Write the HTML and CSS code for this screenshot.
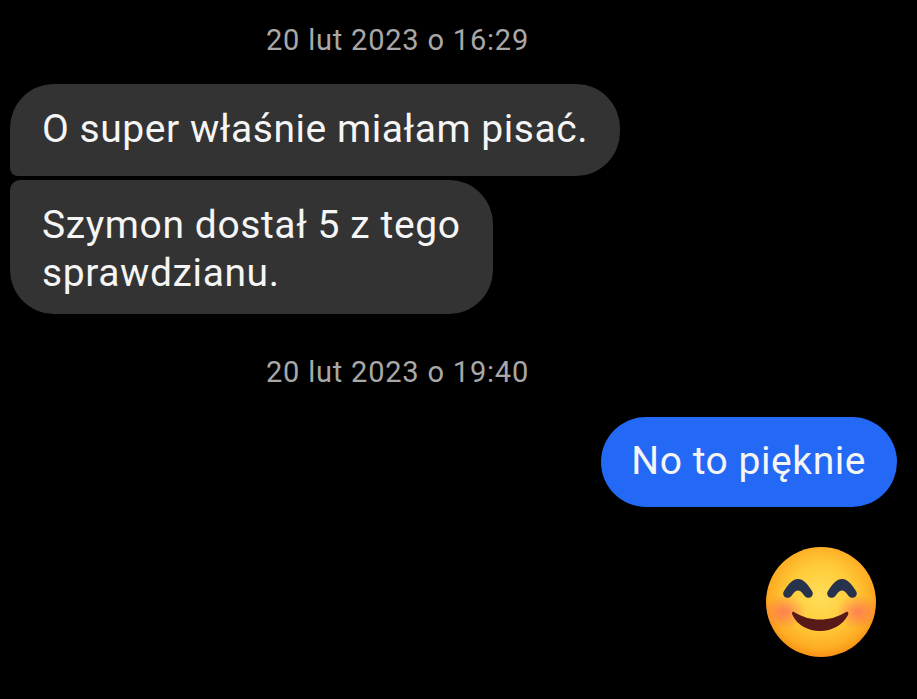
FILE: index.html
```html
<!DOCTYPE html>
<html lang="pl">
<head>
    <meta charset="UTF-8">
    <meta name="viewport" content="width=device-width, initial-scale=1.0">
    <title>Wiadomości</title>
    <link rel="stylesheet" href="styles.css">
</head>
<body>
    <main class="chat">
        <div class="time time-first">20 lut 2023 o 16:29</div>

        <div class="group">
            <div class="bubble in in-first">O super właśnie miałam pisać.</div>
            <div class="bubble in in-last">Szymon dostał 5 z tego<br>sprawdzianu.</div>
        </div>

        <div class="time time-second">20 lut 2023 o 19:40</div>

        <div class="bubble out">No to pięknie</div>

        <!-- Emoji -->
        <svg class="emoji" width="112" height="112" viewBox="0 0 112 112" role="img" aria-label="uśmiechnięta buźka">
            <defs>
                <radialGradient id="face" cx="50%" cy="45%" r="56%">
                    <stop offset="0" stop-color="#ffde5a"/>
                    <stop offset="0.5" stop-color="#ffcc3a"/>
                    <stop offset="0.85" stop-color="#fdab22"/>
                    <stop offset="1" stop-color="#f78e15"/>
                </radialGradient>
                <radialGradient id="blush">
                    <stop offset="0" stop-color="#ff6a5c" stop-opacity="0.75"/>
                    <stop offset="1" stop-color="#ff6a5c" stop-opacity="0"/>
                </radialGradient>
                <clipPath id="faceClip">
                    <circle cx="56" cy="56" r="55"/>
                </clipPath>
            </defs>
            <circle cx="56" cy="56" r="55" fill="url(#face)"/>
            <g clip-path="url(#faceClip)">
                <ellipse cx="19" cy="66" rx="22" ry="17" fill="url(#blush)"/>
                <ellipse cx="93" cy="66" rx="22" ry="17" fill="url(#blush)"/>
            </g>
            <path d="M19 45 C23 39 27 33 33 33 C39 33 43 39 47 45 C50 50 44 54 40 50.500 C38 48 36 44.500 33 44.500 C30 44.500 28 48 26 50.500 C22 54 16 50 19 45 Z" fill="#27324d"/>
            <path d="M63 45 C67 39 71 33 77 33 C83 33 87 39 91 45 C94 50 88 54 84 50.500 C82 48 80 44.500 77 44.500 C74 44.500 72 48 70 50.500 C66 54 60 50 63 45 Z" fill="#27324d"/>
            <path d="M29 66 C37 71 46 73.500 55 73.500 C64 73.500 73 71 81 66 C83 65 84 67 83 69 C78 79 67 85 55 85 C43 85 32 79 27.500 69 C26.500 67 27 65 29 66 Z" fill="#571a18"/>
        </svg>
    </main>
</body>
</html>
```

FILE: styles.css
```css
/* General */
html, body {
    margin: 0;
    height: 100%;
    background-color: #000;
}

body {
    font-family: 'Roboto', 'Liberation Sans', sans-serif;
    overflow: hidden;
}

.chat {
    display: flex;
    flex-direction: column;
    padding: 0 20px 0 10px;
}

/* Daty */
.time {
    text-align: center;
    color: #a8a8a8;
    font-size: 29px;
    letter-spacing: 0.8px;
    line-height: 34px;
    width: 775px;
}

.time-first {
    margin-top: 23px;
    margin-bottom: 27px;
}

.time-second {
    margin-top: 41px;
    margin-bottom: 28px;
}

/* Dymki */
.group {
    display: flex;
    flex-direction: column;
    align-items: flex-start;
    gap: 4px;
}

.bubble {
    color: #f5f5f5;
    font-size: 39px;
    letter-spacing: 0.6px;
    line-height: 48px;
    padding: 21px 32px 23px;
}

.in {
    background-color: #333;
}

.in-first {
    letter-spacing: 0.55px;
    border-radius: 44px 44px 44px 8px;
}

.in-last {
    padding-bottom: 17px;
    border-radius: 10px 44px 44px 44px;
}

.out {
    align-self: flex-end;
    padding: 20px 31px 22px 30px;
    letter-spacing: 0.55px;
    background-color: #2369f6;
    border-radius: 45px;
}

.emoji {
    align-self: flex-end;
    margin-top: 39px;
    margin-right: 20px;
}
```
